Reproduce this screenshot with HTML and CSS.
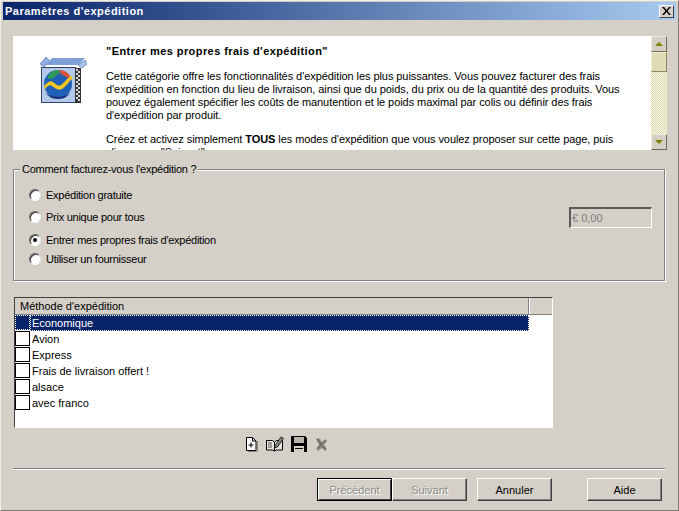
FILE: index.html
```html
<!DOCTYPE html>
<html lang="fr">
<head>
  <meta charset="UTF-8">
  <title>Paramètres d'expédition</title>
  <link rel="stylesheet" href="styles.css">
</head>
<body>
  <div class="window">
    <div class="titlebar">
      <span class="title">Paramètres d'expédition</span>
      <span class="close">
        <svg width="9" height="8" viewBox="0 0 9 8"><path d="M0 0h2l2.500 3L7 0h2L5.500 4 9 8H7L4.500 5 2 8H0l3.500-4z" fill="#000"/></svg>
      </span>
    </div>

    <!-- description -->
    <div class="intro">
      <div class="intro-view">
        <div class="intro-icon">
          <svg width="49" height="48" viewBox="0 0 49 48">
            <path d="M2 9l6-7 4 4-6 6z" fill="#8fb0e0" stroke="#5c7cb0" stroke-width=".7"/>
            <path d="M14 3h33l-7 7H8z" fill="#7f9fd8"/>
            <path d="M40 10l7-5 2 4-5 4z" fill="#a5c0ea" stroke="#5c7cb0" stroke-width=".7"/>
            <rect x="3.500" y="12.500" width="34" height="35" fill="#b4c8ea" stroke="#30426e"/>
            <rect x="37" y="13" width="6" height="35" fill="#333"/>
            <path d="M38 14h2v2h-2zM40 16h2v2h-2zM38 18h2v2h-2zM40 20h2v2h-2zM38 22h2v2h-2zM40 24h2v2h-2zM38 26h2v2h-2zM40 28h2v2h-2zM38 30h2v2h-2zM40 32h2v2h-2zM38 34h2v2h-2zM40 36h2v2h-2zM38 38h2v2h-2zM40 40h2v2h-2zM38 42h2v2h-2zM40 44h2v2h-2z" fill="#ddd"/>
            <circle cx="20" cy="29" r="14" fill="#1f5fb8"/>
            <path d="M9 23c3-7 8-8 12-8 2 3-1 5-4 6-1 3-4 4-8 2z" fill="#2f9a58"/>
            <path d="M21 15c6 0 10 3 12 8-3 0-6-1-8-3-2 0-3-2-4-5z" fill="#d9573a"/>
            <path d="M6 31c4-4 6-6 9-4s5 5 8 3 6-7 10-9l2 2c-4 3-7 9-11 11s-7-1-10-3-5 1-7 3z" fill="#f4c51e"/>
            <path d="M8 38c6 5 18 5 24 0-3 5-8 6-12 6s-9-1-12-6z" fill="#20357e"/>
          </svg>
        </div>
        <div class="intro-text">
          <h1>"Entrer mes propres frais d'expédition"</h1>
          <p>Cette catégorie offre les fonctionnalités d'expédition les plus puissantes. Vous pouvez facturer des frais<br>d'expédition en fonction du lieu de livraison, ainsi que du poids, du prix ou de la quantité des produits. Vous<br>pouvez également spécifier les coûts de manutention et le poids maximal par colis ou définir des frais<br>d'expédition par produit.</p>
          <p>Créez et activez simplement <b>TOUS</b> les modes d'expédition que vous voulez proposer sur cette page, puis<br>cliquez sur "Suivant".</p>
        </div>
      </div>
      <div class="scrollbar">
        <span class="sb-btn"><i class="arrow-up"></i></span>
        <span class="sb-thumb"></span>
        <span class="sb-track"></span>
        <span class="sb-btn"><i class="arrow-down"></i></span>
      </div>
    </div>

    <!-- how shipping is charged -->
    <fieldset class="group">
      <legend>Comment facturez-vous l'expédition ?</legend>
      <div class="radio-row row-1"><span class="radio"></span>Expédition gratuite</div>
      <div class="radio-row row-2"><span class="radio"></span>Prix unique pour tous<input class="price" type="text" value="€ 0,00" disabled></div>
      <div class="radio-row row-3"><span class="radio checked"></span>Entrer mes propres frais d'expédition</div>
      <div class="radio-row row-4"><span class="radio"></span>Utiliser un fournisseur</div>
    </fieldset>

    <!-- methods -->
    <div class="list">
      <div class="list-head"><span class="col-name">Méthode d'expédition</span><span class="col-rest"></span></div>
      <div class="list-row selected"><span class="check"></span><span class="label">Economique</span></div>
      <div class="list-row"><span class="check"></span><span class="label">Avion</span></div>
      <div class="list-row"><span class="check"></span><span class="label">Express</span></div>
      <div class="list-row"><span class="check"></span><span class="label">Frais de livraison offert !</span></div>
      <div class="list-row"><span class="check"></span><span class="label">alsace</span></div>
      <div class="list-row"><span class="check"></span><span class="label">avec franco</span></div>
    </div>

    <div class="tools">
      <svg width="15" height="16" viewBox="0 0 15 16"><path d="M2.500 1.500h6l3.500 3.500v9.500h-9.500z" fill="#fff" stroke="#000"/><path d="M8.500 1.500v3.500H12" fill="none" stroke="#000"/><path d="M13.500 5v10.500H4" fill="none" stroke="#8a8880"/><path d="M7 6.500v5M4.500 9h5" stroke="#000" fill="none"/></svg>
      <svg width="18" height="16" viewBox="0 0 18 16"><path d="M.5 4.500h6l2 1.500v9l-2-1h-6zM8.500 6l2-1.500h6v9.500h-6l-2 1" fill="#e8e6e0" stroke="#000"/><path d="M2 7h4M2 9h4M2 11h4" stroke="#555"/><path d="M9 9.500l6-8.500 2.500 1.500-6 8.500-3 1z" fill="#8a8880" stroke="#000" stroke-width=".8"/></svg>
      <svg width="16" height="16" viewBox="0 0 16 16"><path d="M0 0h14l2 2v14H0z" fill="#000"/><rect x="3" y="1" width="10" height="6" fill="#b8b4ac"/><rect x="3" y="10" width="10" height="6" fill="#d4d0c8"/><rect x="4" y="12" width="8" height="1" fill="#000"/></svg>
      <svg width="15" height="16" viewBox="0 0 15 16"><path d="M2 3l3-1 3 4 4-3 1 2-3 4 3 4-2 2-3-3-4 3-2-2 3-4z" fill="#8a8880"/><path d="M3 3l8 10M11 4l-7 8" stroke="#5f5d58" fill="none"/></svg>
    </div>

    <div class="separator"></div>

    <div class="buttons">
      <button class="btn default" disabled>Précédent</button>
      <button class="btn" disabled>Suivant</button>
      <button class="btn cancel">Annuler</button>
      <button class="btn help">Aide</button>
    </div>
  </div>
</body>
</html>
```

FILE: styles.css
```css
html, body { margin: 0; padding: 0; }
body { width: 679px; height: 511px; overflow: hidden; background: #d4d0c8; font-family: "Liberation Sans", Arial, sans-serif; font-size: 11px; color: #000; }
.window { width: 679px; height: 511px; box-sizing: border-box; padding: 1px 2px 0 2px; background: #d4d0c8; border: 1px solid; border-color: #f0eee8 #7c7a74 #7c7a74 #f0eee8; }

.titlebar { height: 18px; display: flex; align-items: center; justify-content: space-between; padding: 0 2px; background: linear-gradient(to right, #0a246a, #a6caf0); }
.title { color: #fff; font-weight: bold; font-size: 11px; letter-spacing: .5px; }
.close { width: 15px; height: 13px; display: flex; align-items: center; justify-content: center; background: #d4d0c8; border: 1px solid; border-color: #fff #404040 #404040 #fff; box-sizing: border-box; }

.intro { display: flex; height: 114px; margin: 16px 10px 0 10px; width: 654px; }
.intro-view { width: 638px; display: flex; background: #fff; overflow: hidden; }
.intro-icon { width: 93px; padding: 19px 0 0 25px; box-sizing: border-box; flex: none; }
.intro-text { width: 545px; flex: none; line-height: 13px; letter-spacing: -.07px; }
.intro-text h1 { font-size: 11px; line-height: 13px; margin: 9px 0 12px 0; font-weight: bold; letter-spacing: .42px; }
.intro-text p { margin: 0 0 11px 0; white-space: nowrap; }

.scrollbar { width: 16px; display: flex; flex-direction: column; }
.sb-btn { height: 16px; flex: none; display: flex; align-items: center; justify-content: center; background: #d4d0c8; box-sizing: border-box; border: 1px solid; border-color: #eeecd8 #6e6c50 #6e6c50 #eeecd8; }
.sb-thumb { height: 20px; flex: none; background: #dddcb4; box-sizing: border-box; border: 1px solid; border-color: #f0efd8 #8a8860 #8a8860 #f0efd8; }
.sb-track { flex: 1; background: repeating-conic-gradient(#dcdcae 0 25%, #f6f6e6 0 50%) 0 0 / 2px 2px; }
.arrow-up { width: 0; height: 0; border: 4px solid transparent; border-top: 0; border-bottom-color: #808000; }
.arrow-down { width: 0; height: 0; border: 4px solid transparent; border-bottom: 0; border-top-color: #808000; }

.group { width: 652px; height: 118px; box-sizing: border-box; margin: 13px 0 0 10px; padding: 0; border: 1px solid #808080; border-radius: 0; box-shadow: 1px 1px 0 #fff, inset 1px 1px 0 #fff; letter-spacing: -.26px; }
.group legend { margin-left: 6px; padding: 0 2px; line-height: 13px; color: #000; background: #d4d0c8; }
.radio-row { display: flex; align-items: center; height: 20px; padding-left: 15px; }
.row-1 { margin-top: 9px; }
.row-2 { margin-top: 1px; height: 22px; }
.row-3 { margin-top: 2px; }
.row-4 { height: 18px; }
.radio { width: 12px; height: 12px; flex: none; margin-right: 5px; box-sizing: border-box; border-radius: 50%; background: #fff; border: 1px solid; border-color: #606060 #e8e6e0 #fff #606060; box-shadow: inset 1px 1px 0 #404040; display: flex; align-items: center; justify-content: center; }
.radio.checked::after { content: ""; width: 4px; height: 4px; border-radius: 50%; background: #000; }
.price { width: 83px; height: 21px; box-sizing: border-box; margin-left: auto; margin-right: 12px; padding: 0 1px; font: inherit; letter-spacing: 0; color: #808080; background: #d4d0c8; border: 1px solid; border-width: 2px 1px 1px 2px; border-color: #5a5a5a #fff #fff #5a5a5a; }

.list { width: 539px; height: 131px; box-sizing: border-box; margin: 16px 0 0 11px; background: #fff; border: 1px solid; border-color: #404040 #fff #fff #404040; }
.list-head { height: 17px; display: flex; background: #d4d0c8; border-bottom: 1px solid #808080; box-sizing: border-box; }
.col-name { width: 514px; box-sizing: border-box; padding-left: 5px; line-height: 16px; border-right: 1px solid #808080; }
.col-rest { flex: 1; border-left: 1px solid #fff; }
.list-row { display: flex; height: 16px; }
.check { width: 15px; height: 15px; flex: none; box-sizing: border-box; border: 1px solid #000; background: #fff; }
.label { flex: none; width: 499px; box-sizing: border-box; padding-left: 2px; line-height: 16px; }
.selected .check { background: #0a246a; border-color: #0a246a; outline: 1px dotted #fff; outline-offset: -1px; }
.selected .label { background: #0a246a; color: #fff; outline: 1px dotted #fff; outline-offset: -1px; }

.tools { display: flex; align-items: center; gap: 7px; height: 16px; margin: 8px 0 0 241px; }

.separator { width: 652px; height: 1px; margin: 16px 0 0 10px; background: #808080; border-bottom: 1px solid #fff; }

.buttons { display: flex; margin: 8px 0 0 314px; }
.btn { width: 75px; height: 23px; box-sizing: border-box; padding: 0; margin: 0; font: inherit; color: #000; background: #d4d0c8; border: 1px solid; border-color: #fff #404040 #404040 #fff; box-shadow: inset -1px -1px 0 #808080; }
.btn:disabled { color: #8e8c86; text-shadow: 1px 1px 0 #fff; }
.btn.default { border-color: #000; box-shadow: inset 1px 1px 0 #fff, inset -1px -1px 0 #404040; }
.cancel { margin-left: 10px; }
.help { margin-left: 35px; }
```
